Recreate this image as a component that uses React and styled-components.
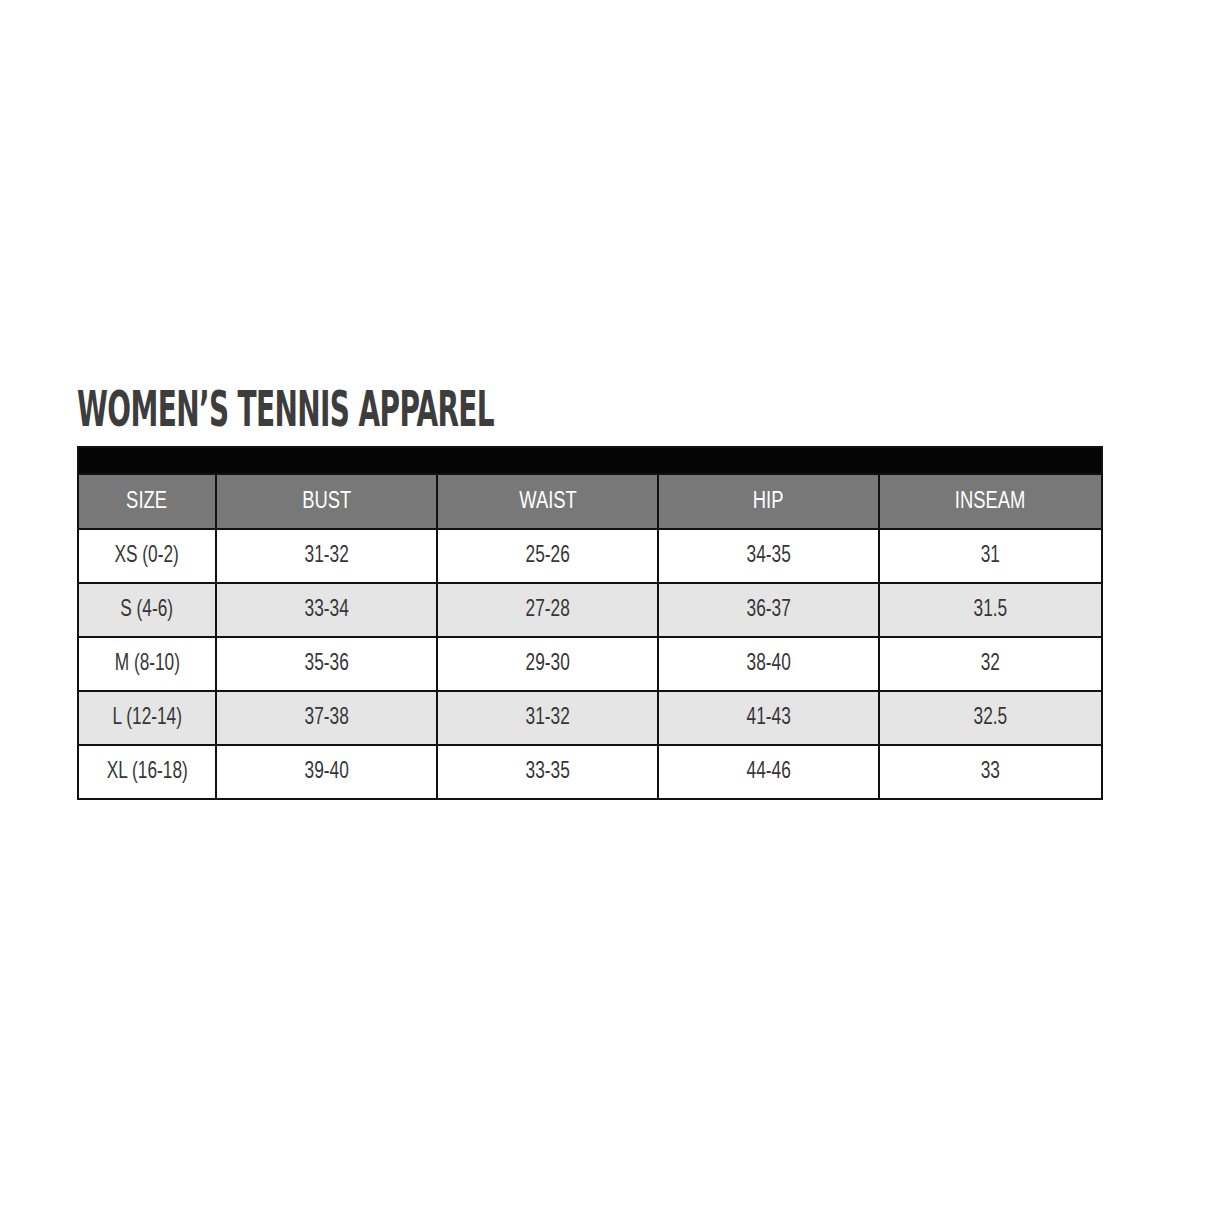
import React from 'react';
import styled, { createGlobalStyle } from 'styled-components';

const GlobalStyle = createGlobalStyle`
	html, body {
		margin: 0;
		padding: 0;
		background: #ffffff;
	}
`;

const COLUMNS = ['SIZE', 'BUST', 'WAIST', 'HIP', 'INSEAM'];

const ROWS = [
	['XS (0-2)', '31-32', '25-26', '34-35', '31'],
	['S (4-6)', '33-34', '27-28', '36-37', '31.5'],
	['M (8-10)', '35-36', '29-30', '38-40', '32'],
	['L (12-14)', '37-38', '31-32', '41-43', '32.5'],
	['XL (16-18)', '39-40', '33-35', '44-46', '33'],
];

const TITLE_FONT = `"DejaVu Sans Condensed", "Liberation Sans", sans-serif`;
const BODY_FONT = `"Liberation Sans", Arial, sans-serif`;

const Page = styled.div`
	width: 1214px;
	height: 1214px;
	padding: 386px 0 0 77px;
	box-sizing: border-box;
`;

const Title = styled.h1`
	margin: 0 0 12px;
	font-family: ${TITLE_FONT};
	font-weight: 700;
	font-size: 49px;
	line-height: 48px;
	letter-spacing: -1px;
	color: #3d3d3d;
	white-space: nowrap;
	transform: scaleX(0.635);
	transform-origin: left center;
`;

const Table = styled.table`
	border-collapse: collapse;
	width: 1024px;
	table-layout: fixed;
	font-family: ${BODY_FONT};
	border: 2px solid #111;
`;

const TopBar = styled.td`
	height: 25px;
	padding: 0;
	background: #050505;
`;

const HeadCell = styled.th`
	height: 51px;
	padding: 0 0 2px;
	background: #787878;
	color: #ffffff;
	font-weight: 400;
	font-size: 23px;
	border: 2px solid #111;
	text-align: center;
`;

const Row = styled.tr`
	background: ${p => (p.$shaded ? '#e5e5e5' : '#ffffff')};
`;

const Cell = styled.td`
	height: 48px;
	padding: 0 0 4px;
	color: #363636;
	font-size: 24px;
	border: 2px solid #111;
	text-align: center;
`;

const Narrow = styled.span`
	display: inline-block;
	transform: scaleX(${p => p.$scale});
	white-space: nowrap;
`;

const widths = [138, 221, 221, 221, 223];

export default function App() {
	return (
		<Page>
			<GlobalStyle />
			<Title>WOMEN’S TENNIS APPAREL</Title>
			<Table>
				<colgroup>
					{widths.map((w, i) => (
						<col key={i} style={{ width: w }} />
					))}
				</colgroup>
				<thead>
					<tr>
						<TopBar colSpan={5} />
					</tr>
					<tr>
						{COLUMNS.map(c => (
							<HeadCell key={c}>
								<Narrow $scale={0.8}>{c}</Narrow>
							</HeadCell>
						))}
					</tr>
				</thead>
				<tbody>
					{ROWS.map((r, i) => (
						<Row key={r[0]} $shaded={i % 2 === 1}>
							{r.map((v, j) => (
								<Cell key={j}>
									<Narrow $scale={0.72}>{v}</Narrow>
								</Cell>
							))}
						</Row>
					))}
				</tbody>
			</Table>
		</Page>
	);
}
